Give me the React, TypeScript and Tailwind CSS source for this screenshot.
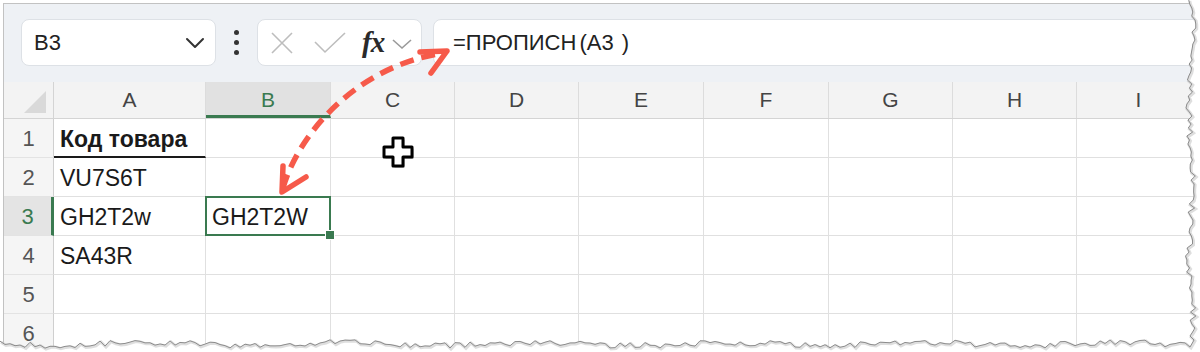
import React from 'react';

const cols = [
  { key: 'A', w: 'w-[152px]' },
  { key: 'B', w: 'w-[125px]' },
  { key: 'C', w: 'w-[124px]' },
  { key: 'D', w: 'w-[124px]' },
  { key: 'E', w: 'w-[125px]' },
  { key: 'F', w: 'w-[125px]' },
  { key: 'G', w: 'w-[124px]' },
  { key: 'H', w: 'w-[124px]' },
  { key: 'I', w: 'w-[124px]' },
];

const rows: { n: number; a?: string; b?: string; bold?: boolean }[] = [
  { n: 1, a: 'Код товара', bold: true },
  { n: 2, a: 'VU7S6T' },
  { n: 3, a: 'GH2T2w', b: 'GH2T2W' },
  { n: 4, a: 'SA43R' },
  { n: 5 },
  { n: 6 },
];

function rnd(i: number, seed: number) {
  const v = Math.sin(i * 12.9898 + seed * 78.233) * 43758.5453;
  return v - Math.floor(v);
}

// torn paper edge, right and bottom
function tornEdge() {
  const pts: [number, number][] = [];
  for (let y = 0; y <= 340; y += 4) {
    pts.push([1191 + (rnd(y, 1) - 0.5) * 7 + Math.sin(y / 23) * 2, y]);
  }
  for (let x = 1190; x >= 0; x -= 5) {
    pts.push([x, 344 + (rnd(x, 2) - 0.5) * 6 + Math.sin(x / 31) * 1.5]);
  }
  return pts;
}

function NameBox() {
  return (
    <div className="w-[195px] h-[47px] rounded-[8px] bg-white border border-[#dde1e6] flex items-center justify-between pl-[12px] pr-[10px]">
      <span className="text-[22px] text-[#222]">B3</span>
      <svg width="20" height="12" viewBox="0 0 20 12">
        <path d="M2 2 L10 10 L18 2" fill="none" stroke="#333" strokeWidth="2" strokeLinecap="round" strokeLinejoin="round" />
      </svg>
    </div>
  );
}

function FormulaButtons() {
  return (
    <div className="w-[165px] h-[47px] rounded-[8px] bg-white border border-[#dde1e6] flex items-center pl-[12px]">
      <svg width="24" height="22" viewBox="0 0 24 22">
        <path d="M2 1 L22 21 M22 1 L2 21" stroke="#bdbdbd" strokeWidth="1.6" fill="none" />
      </svg>
      <svg width="32" height="22" viewBox="0 0 32 22" className="ml-[20px]">
        <path d="M1 10 L11 20 L31 1" stroke="#bdbdbd" strokeWidth="1.6" fill="none" />
      </svg>
      <span className="ml-[16px] font-['Liberation_Serif',serif] italic font-bold text-[29px] leading-none text-[#2a2a2a] tracking-[-1px]">fx</span>
      <svg width="20" height="11" viewBox="0 0 20 11" className="ml-[8px] mt-[3px]">
        <path d="M1 1 L10 9 L19 1" fill="none" stroke="#9a9a9a" strokeWidth="1.6" />
      </svg>
    </div>
  );
}

export default function App() {
  const edge = tornEdge();
  const edgeStr = edge.map(p => p.join(',')).join(' ');
  const fillStr = `1200,0 ${edgeStr} 0,352 1200,352`;

  return (
    <div className="w-[1200px] h-[352px] bg-white relative overflow-hidden font-['Liberation_Sans',Arial,sans-serif]">
      <div className="ml-[3px] mt-[3px] w-[1215px] h-[360px] border-l border-t border-[#c2c2c2] flex flex-col">
        {/* formula toolbar */}
        <div className="h-[78px] bg-[#eef1f5] flex items-start pt-[15px] pl-[17px]">
          <NameBox />
          <div className="w-[41px] h-[47px] flex flex-col items-center justify-center gap-[5px]">
            <div className="w-[5px] h-[5px] rounded-full bg-[#333]" />
            <div className="w-[5px] h-[5px] rounded-full bg-[#333]" />
            <div className="w-[5px] h-[5px] rounded-full bg-[#333]" />
          </div>
          <FormulaButtons />
          <div className="ml-[11px] flex-1 h-[47px] bg-white border border-[#dde1e6] rounded-l-[8px] flex items-center pl-[19px] text-[22px] text-[#222]">
            <span>=ПРОПИСН</span>
            <span className="ml-[3px]">(</span>
            <span>A3</span>
            <span className="ml-[8px]">)</span>
          </div>
        </div>

        {/* column headers */}
        <div className="h-[37px] flex bg-[#f3f3f3] border-b border-[#d4d4d4]">
          <div className="w-[50px] border-r border-[#d4d4d4] flex items-end justify-end pr-[7px] pb-[5px]">
            <svg width="22" height="22" viewBox="0 0 22 22">
              <polygon points="22,0 22,22 0,22" fill="#d9d9d9" />
            </svg>
          </div>
          {cols.map(c => (
            <div
              key={c.key}
              className={`${c.w} shrink-0 border-r border-[#dcdcdc] flex items-center justify-center text-[21px] ${
                c.key === 'B' ? 'bg-[#e1e1e1] text-[#3a7a50] border-b-[3px] border-b-[#3a7a50] pt-[3px]' : 'text-[#444]'
              }`}
            >
              {c.key}
            </div>
          ))}
        </div>

        {/* rows */}
        {rows.map(r => (
          <div key={r.n} className="h-[39px] flex shrink-0">
            <div
              className={`w-[50px] shrink-0 flex items-center justify-center text-[22px] border-b border-[#e3e3e3] ${
                r.n === 3
                  ? 'bg-[#e4e4e4] text-[#3a7a50] border-r-[3px] border-r-[#3a7a50]'
                  : 'bg-[#f5f5f5] text-[#555] border-r border-r-[#cfcfcf]'
              }`}
            >
              {r.n}
            </div>
            {cols.map(c => {
              const text = c.key === 'A' ? r.a : c.key === 'B' ? r.b : undefined;
              const underline = c.key === 'A' && r.n === 1;
              const selected = c.key === 'B' && r.n === 3;
              return (
                <div
                  key={c.key}
                  className={`${c.w} shrink-0 relative border-r border-[#e0e0e0] flex items-center pl-[6px] pt-[3px] text-[23px] text-[#1a1a1a] ${
                    underline ? 'border-b-2 border-b-[#1a1a1a] font-bold' : 'border-b border-b-[#e0e0e0]'
                  } ${selected ? 'z-10' : ''}`}
                >
                  {text}
                  {selected && (
                    <>
                      <div className="absolute -left-[1px] -top-[1px] -right-[1px] -bottom-[1px] border-2 border-[#3a7a50]" />
                      <div className="absolute -right-[5px] -bottom-[5px] w-[10px] h-[10px] bg-[#3a7a50] border border-white" />
                    </>
                  )}
                </div>
              );
            })}
          </div>
        ))}
      </div>

      {/* annotation arrow, cursor, torn edge */}
      <svg className="absolute left-0 top-0 z-20 pointer-events-none" width="1200" height="352" viewBox="0 0 1200 352">
        <path
          d="M283 188 C300 130 360 65 444 53"
          fill="none"
          stroke="#f65a4a"
          strokeWidth="5.5"
          strokeDasharray="14 8"
        />
        <path d="M283 166 L282 192 L306 177" fill="none" stroke="#f65a4a" strokeWidth="5.5" strokeLinecap="round" strokeLinejoin="round" />
        <path d="M420 52 L447 51 L431 73" fill="none" stroke="#f65a4a" strokeWidth="5.5" strokeLinecap="round" strokeLinejoin="round" />

        <g transform="translate(383 137)">
          <path
            d="M10 1 H20 V10 H29 V20 H20 V29 H10 V20 H1 V10 H10 Z"
            transform="translate(1.5 1.5)"
            fill="#000"
            opacity="0.4"
          />
          <path
            d="M10 1 H20 V10 H29 V20 H20 V29 H10 V20 H1 V10 H10 Z"
            fill="#fff"
            stroke="#000"
            strokeWidth="3"
            strokeLinejoin="round"
          />
        </g>

        <polygon points={fillStr} fill="#fff" />
        <polyline points={edgeStr} fill="none" stroke="#c8c8c8" strokeWidth="3" opacity="0.6" transform="translate(1 1)" />
        <polyline points={edgeStr} fill="none" stroke="#8c8c8c" strokeWidth="1" />
      </svg>
    </div>
  );
}
